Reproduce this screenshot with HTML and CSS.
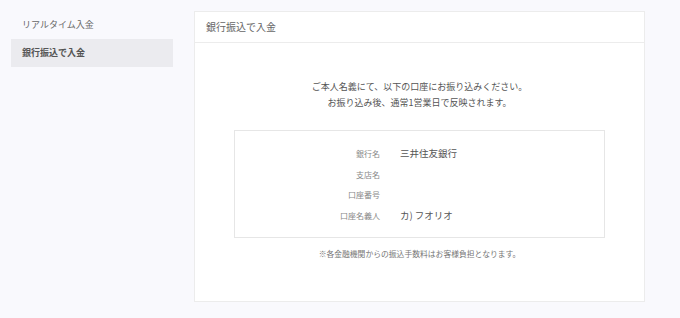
FILE: index.html
```html
<!DOCTYPE html>
<html lang="ja">
<head>
<meta charset="utf-8">
<link rel="stylesheet" href="styles.css">
</head>
<body>
<div class="page">
  <nav class="sidebar">
    <div class="nav-item">リアルタイム入金</div>
    <div class="nav-item active">銀行振込で入金</div>
  </nav>
  <section class="card">
    <div class="card-header">銀行振込で入金</div>
    <div class="card-body">
      <p class="intro">ご本人名義にて、以下の口座にお振り込みください。<br>お振り込み後、通常1営業日で反映されます。</p>
      <div class="bank-box">
        <div class="row"><span class="label">銀行名</span><span class="value">三井住友銀行</span></div>
        <div class="row"><span class="label">支店名</span><span class="value"></span></div>
        <div class="row"><span class="label">口座番号</span><span class="value"></span></div>
        <div class="row"><span class="label">口座名義人</span><span class="value">カ) フオリオ</span></div>
      </div>
      <p class="note">※各金融機関からの振込手数料はお客様負担となります。</p>
    </div>
  </section>
</div>
</body>
</html>
```
FILE: styles.css
```css
html, body {
  margin: 0;
  padding: 0;
}
body {
  background: #f9f9fd;
  font-family: "Noto Sans CJK JP", "Noto Sans", sans-serif;
  color: #555;
}
.page {
  display: flex;
  align-items: flex-start;
  padding: 11px 0 0 11px;
  gap: 21px;
}
.sidebar {
  width: 162px;
  display: flex;
  flex-direction: column;
}
.nav-item {
  height: 28px;
  line-height: 28px;
  padding-left: 11px;
  font-size: 9px;
  color: #666;
}
.nav-item.active {
  background: #ebebef;
  font-weight: 700;
  color: #555;
}
.card {
  width: 449px;
  height: 289px;
  background: #fff;
  border: 1px solid #ececec;
}
.card-header {
  height: 30px;
  line-height: 30px;
  padding-left: 11px;
  font-size: 10px;
  color: #666;
  border-bottom: 1px solid #ececec;
}
.card-body {
  padding: 36px 39px 0;
}
.intro {
  margin: 0;
  text-align: center;
  font-size: 9px;
  line-height: 16px;
  color: #555;
}
.bank-box {
  margin-top: 19px;
  border: 1px solid #e6e6e6;
  padding: 12px 0 11px;
}
.row {
  display: flex;
  align-items: center;
  height: 20.7px;
}
.label {
  width: 145px;
  text-align: right;
  font-size: 8px;
  color: #888;
}
.value {
  margin-left: 20px;
  font-size: 9.5px;
  color: #555;
}
.note {
  margin: 10px 0 0;
  text-align: center;
  font-size: 7.8px;
  line-height: 12px;
  color: #777;
}
```
